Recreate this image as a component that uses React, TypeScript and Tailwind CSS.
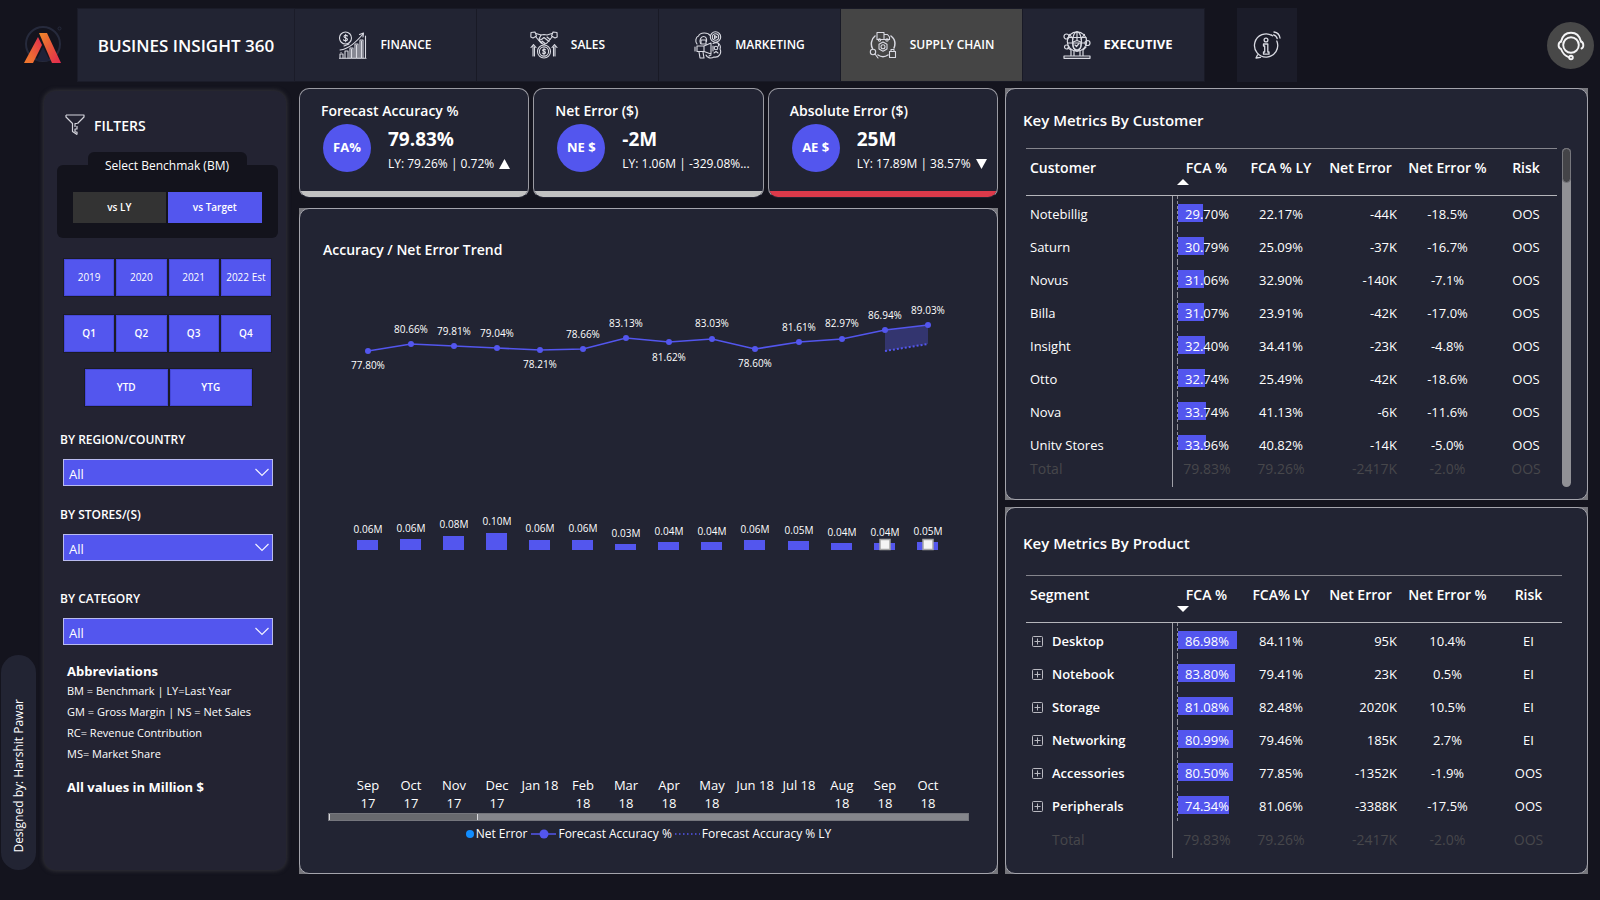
import React from "react";

/* ---------- icons ---------- */

const iconProps = {
  width: 28,
  height: 28,
  viewBox: "0 0 28 28",
  fill: "none",
  stroke: "#d9dae2",
  strokeWidth: 1.1,
  strokeLinecap: "round" as const,
  strokeLinejoin: "round" as const,
  "aria-hidden": true,
};

function Logo() {
  return (
    <svg width="40" height="42" viewBox="0 0 40 42" aria-hidden="true">
      <defs>
        <linearGradient id="legLeft" x1="0" y1="1" x2="1" y2="0">
          <stop offset="0" stopColor="#f07a2c" />
          <stop offset="0.35" stopColor="#ee6a34" />
          <stop offset="1" stopColor="#e2284f" />
        </linearGradient>
        <linearGradient id="legRight" x1="0" y1="0" x2="1" y2="1">
          <stop offset="0" stopColor="#f08a2a" />
          <stop offset="0.5" stopColor="#e8553a" />
          <stop offset="1" stopColor="#e2284f" />
        </linearGradient>
      </defs>
      <circle cx="20" cy="19" r="17" fill="none" stroke="#262a3c" strokeWidth="2" />
      <path d="M20 22 L27 36 H13 Z" fill="#1e2238" />
      <circle cx="36.500" cy="3.500" r="1.500" fill="none" stroke="#262a3c" />
      <path d="M15 12 L19 20 L10 38 H1 Z" fill="url(#legLeft)" />
      <path d="M16 8 H24 L38 38 H29 Z" fill="url(#legRight)" />
    </svg>
  );
}

function FinanceIcon() {
  return (
    <svg {...iconProps}>
      <circle cx="6.500" cy="7" r="6" />
      <path d="M8.500 5 C8 4 5 4 5 5.600 C5 7.500 8.500 6.500 8.500 8.500 C8.500 10 5 10 4.500 8.800 M6.700 3.200 V10.800" />
      <path d="M1 19 C10 18 17 11 24 3 M20.500 3.500 L24.500 2 L24 6" />
      <path d="M1 27 V23 H4 V27 M6 27 V20 H9 V27 M11 27 V17 H14 V27 M16 27 V13 H19 V27 M21 27 V9 H24 V27" />
      <path d="M26.500 5 V27 M0.500 27.300 H27 M12.500 18 V27 M17.500 14 V27 M22.500 10 V27" />
      <path d="M2 21.500 h.1 M5 15 l5 -2" />
    </svg>
  );
}

function SalesIcon() {
  return (
    <svg {...iconProps}>
      <path d="M1 1.500 L5 1 L6.500 5 L3 7 L0.800 6 Z M27 1.500 L23 1 L21.500 5 L25 7 L27.200 6 Z" />
      <path d="M6 2.500 L11 4 L14 3.500 L17 4 L22 2.500 M5.500 5.500 L11 12 L14 13.500 L17 12 L22.500 5.500" />
      <path d="M11 4 L9 8 L11.500 8.500 L14 6.500 L19 10.500 M9 9 L12 12 M17 6 L20 8.500 M12 10 L15 12.500" />
      <circle cx="14" cy="20.500" r="6.500" />
      <circle cx="14" cy="20.500" r="4.600" />
      <path d="M15.500 18.800 C15 18 12.600 18 12.600 19.300 C12.600 20.800 15.500 20 15.500 21.600 C15.500 23 13 23 12.500 22 M14 17.300 V23.800" />
      <path d="M3 25 V14 M1 16.500 L3.500 13.500 L6 16.500 M4.500 25 V16 M25 25 V14 M22 16.500 L24.500 13.500 L27 16.500 M23.500 25 V16" />
    </svg>
  );
}

function MarketingIcon() {
  return (
    <svg {...iconProps}>
      <circle cx="21.500" cy="6" r="5.200" />
      <circle cx="21.500" cy="6" r="3.200" />
      <path d="M20.500 4.500 L23 6 L20.500 7.500 Z" />
      <path d="M16 4.500 C14 1 6 1 4.500 5 C1.500 6 1 11 3 13 M6.500 12.500 C5 9 7 5.500 9.500 5.500 C12 5.500 13 8 12.500 10.500" />
      <path d="M7 9 H12 V13 H7 Z M3 15 H10 L17 12 V23 L10 20.500 H3 Z M1 16 V20 M5 21 L6 27 H10 L9 21 M10 15 V20.500" />
      <path d="M19 12.500 C24 10 27.500 14 26 18 C28 22 25 27 20 26 C17 28 13 27 12 24" />
      <circle cx="22" cy="17" r="1.800" />
      <path d="M19 15 v5 M20 22 l2 -1.500 l2 1.500 M15 25 l2 -1 M24.500 13 v2" />
    </svg>
  );
}

function SupplyIcon() {
  return (
    <svg {...iconProps}>
      <path d="M8 1.500 H15 V8.500 H8 Z M15 3.500 H18.500 L20.500 6 V8.500 H15" />
      <circle cx="10.500" cy="9" r="1.200" />
      <circle cx="18" cy="9" r="1.200" />
      <path d="M6 5 C2 8 1.500 14 3.500 17.500 M22 5 C26 8 26.500 13 25 17 M9 24 C12 26 16 26 19 24" strokeWidth="1.500" />
      <path d="M14 11 L18 13.300 V18 L14 20.300 L10 18 V13.300 Z" />
      <circle cx="14" cy="15.700" r="2" />
      <circle cx="4" cy="21" r="2.700" />
      <path d="M6 23 L9 27 M20.500 20.500 H26.500 V26.500 H20.500 Z M22 20.500 V18.500 H25 V20.500" />
    </svg>
  );
}

function ExecutiveIcon() {
  return (
    <svg {...iconProps} strokeWidth={1.2}>
      <circle cx="14" cy="10.500" r="9.700" />
      <ellipse cx="14" cy="10.500" rx="4.500" ry="9.700" />
      <path d="M14 0.800 V9 M5 6.500 H23 M4.500 12 H23.500 M6.500 3.500 L10 8 M21.500 3.500 L18 8" />
      <circle cx="3.500" cy="5.500" r="2.500" />
      <circle cx="24.500" cy="12" r="2.500" />
      <circle cx="3.500" cy="16" r="2" />
      <path d="M14 9.500 L18 11 V15 C18 17 16 18.500 14 19 C12 18.500 10 17 10 15 V11 Z M12 14 l1.500 1.500 l2.500 -3" />
      <path d="M8 25 V19 L5 17 M20 25 V19 L23 16 M11 25 V20 M17 25 V20 M1 25 H27 V27.300 H1 Z" />
    </svg>
  );
}

function InfoIcon() {
  return (
    <svg {...iconProps} strokeWidth={1.3}>
      <path d="M19.500 4.800 A11.600 11.600 0 1 0 23.800 10 M4.500 24 L3 27 L7.500 26.300" />
      <circle cx="13" cy="9" r="1.900" />
      <path d="M10.500 13 H14.800 V21 H16 V23.200 H10.500 V21 H11.700 V15 H10.500 Z" />
      <path d="M20.500 3.800 C22.500 4.300 23.700 5.500 24.200 7.500 M21 1 C24.500 1.500 26.500 3.500 27 7" />
    </svg>
  );
}

function HeadsetIcon() {
  return (
    <svg width="28" height="30" viewBox="0 0 28 30" fill="none" stroke="#f4f4f6" strokeWidth="1.900" strokeLinecap="round" aria-hidden="true">
      <circle cx="14" cy="14" r="7.800" />
      <path d="M4 10.500 C5.500 4.500 9.500 1.800 14 1.800 C18.500 1.800 22.500 4.500 24 10.500" />
      <path d="M4 10.500 C0.800 11.500 0.800 17 4 18 C5.500 22 8 25 12 26.300" />
      <path d="M24 10.500 C27 11.500 27 16.500 24.500 17.500" />
      <circle cx="14" cy="26.500" r="1.800" />
    </svg>
  );
}

function FunnelIcon() {
  return (
    <svg width="20" height="22" viewBox="0 0 20 22" fill="none" stroke="#d4d4dc" strokeWidth="1.200" strokeLinejoin="round" aria-hidden="true">
      <path d="M1 1 H19 V3 L12.500 9.500 M1 1 V3 L7.500 9.500 V17.500 L12 20.500" />
      <path d="M12.500 9.500 H10 V13 M12 12 V15 H10 V18 H12 V20.500" />
    </svg>
  );
}

/* ---------- header ---------- */

const navItems = [
  { label: "FINANCE", Icon: FinanceIcon },
  { label: "SALES", Icon: SalesIcon },
  { label: "MARKETING", Icon: MarketingIcon },
  { label: "SUPPLY CHAIN", Icon: SupplyIcon, active: true },
  { label: "EXECUTIVE", Icon: ExecutiveIcon, bold: true },
];

function Header() {
  return (
    <header className="flex h-[82px] items-stretch pt-2 pr-[6px]">
      <div className="flex w-[77px] shrink-0 items-center pt-px pl-[23px]">
        <Logo />
      </div>
      <h1 className="flex w-[218px] shrink-0 items-center justify-center border border-[#1b1c29] bg-[#222433] pt-px text-[17px] font-semibold whitespace-nowrap">
        BUSINES INSIGHT 360
      </h1>
      <nav className="flex">
        {navItems.map(({ label, Icon, active, bold }) => (
          <a
            key={label}
            href="#"
            aria-current={active ? "page" : undefined}
            className={
              "flex w-[182px] items-center justify-center gap-[13px] border-y border-r border-[#191a26] whitespace-nowrap " +
              (active ? "bg-[#454545] " : "bg-[#222433] ") +
              (bold ? "pl-2 text-[13px] font-bold" : "text-[12px] font-semibold")
            }
          >
            <Icon />
            {label}
          </a>
        ))}
      </nav>
      <button type="button" aria-label="Information" className="ml-8 flex w-[60px] items-center justify-center bg-[#1b1c29]">
        <InfoIcon />
      </button>
      <button
        type="button"
        aria-label="Support"
        className="mt-[14px] ml-auto flex h-[47px] w-[47px] items-center justify-center rounded-full bg-[#484848]"
      >
        <HeadsetIcon />
      </button>
    </header>
  );
}

/* ---------- filters ---------- */

function ButtonRow({ items, className }: { items: string[]; className: string }) {
  return (
    <div className={"flex gap-[2px] " + className}>
      {items.map((t) => (
        <button
          key={t}
          type="button"
          className="h-[37px] flex-1 border border-[#4548d8] bg-[#5356ee] text-[10px] whitespace-nowrap outline outline-[#1b1b26]"
        >
          {t}
        </button>
      ))}
    </div>
  );
}

function FilterSelect({ id, label, className }: { id: string; label: string; className: string }) {
  return (
    <div className={className}>
      <label htmlFor={id} className="ml-4 block text-[12px] leading-4 font-semibold">
        {label}
      </label>
      <div className="relative mt-[11px] mr-[13px] ml-[19px]">
        <select
          id={id}
          className="block h-[27px] w-full appearance-none rounded-none border border-[#b9bbf0] bg-[#5356ee] pt-[3px] pl-[5px] text-[13px] leading-5 text-white"
        >
          <option>All</option>
        </select>
        <svg
          className="pointer-events-none absolute top-[9px] right-1"
          width="14"
          height="9"
          viewBox="0 0 14 9"
          fill="none"
          stroke="#f2f2ff"
          strokeWidth="1.200"
          aria-hidden="true"
        >
          <path d="M0.500 1 L7 7.500 L13.500 1" />
        </svg>
      </div>
    </div>
  );
}

function Filters() {
  return (
    <aside className="mt-[3px] mb-[4px] w-[242px] shrink-0 rounded-[12px] bg-[#232332] shadow-[0_0_4px_1px_#33333a]">
      <div className="mt-[23px] flex h-[22px] items-center gap-[9px] pl-[21px]">
        <FunnelIcon />
        <h2 className="text-[14px] font-semibold">FILTERS</h2>
      </div>

      <div className="mt-[16px] flex flex-col items-center pl-1">
        <h3 className="h-[13px] w-[159px] rounded-t-[6px] bg-[#13131c] pt-1 text-center text-[12px] leading-5">
          <span className="relative z-10">Select Benchmak (BM)</span>
        </h3>
        <div className="flex h-[73px] w-[221px] gap-[2px] rounded-[6px] bg-[#13131c] px-4 pt-[27px]">
          <button type="button" className="h-[31px] flex-1 bg-[#333333] text-[10px] font-semibold">
            vs LY
          </button>
          <button type="button" aria-pressed="true" className="h-[31px] flex-1 bg-[#5356ee] text-[10px] font-semibold">
            vs Target
          </button>
        </div>
      </div>

      <ButtonRow items={["2019", "2020", "2021", "2022 Est"]} className="mt-[21px] mr-[15px] ml-[20px]" />
      <ButtonRow items={["Q1", "Q2", "Q3", "Q4"]} className="mt-[19px] mr-[15px] ml-[20px] font-semibold" />
      <ButtonRow items={["YTD", "YTG"]} className="mt-[17px] mr-[34px] ml-[41px] font-semibold" />

      <FilterSelect id="region" label="BY REGION/COUNTRY" className="mt-[26px]" />
      <FilterSelect id="stores" label="BY STORES/(S)" className="mt-[21px]" />
      <FilterSelect id="category" label="BY CATEGORY" className="mt-[30px]" />

      <div className="mt-[17px] pb-[56px] pl-[23px] text-[11px] leading-[21px] whitespace-nowrap">
        <h3 className="text-[13px] leading-[18px] font-bold">Abbreviations</h3>
        <p>BM = Benchmark | LY=Last Year</p>
        <p>GM = Gross Margin | NS = Net Sales</p>
        <p>RC= Revenue Contribution</p>
        <p>MS= Market Share</p>
        <p className="mt-[13px] text-[13px] font-bold">All values in Million $</p>
      </div>
    </aside>
  );
}

/* ---------- KPI cards ---------- */

type Kpi = { title: string; badge: string; value: string; detail: string; arrow?: "up" | "down"; alert?: boolean };

const kpis: Kpi[] = [
  { title: "Forecast Accuracy %", badge: "FA%", value: "79.83%", detail: "LY: 79.26% | 0.72%", arrow: "up" },
  { title: "Net Error ($)", badge: "NE $", value: "-2M", detail: "LY: 1.06M | -329.08%..." },
  { title: "Absolute Error ($)", badge: "AE $", value: "25M", detail: "LY: 17.89M | 38.57%", arrow: "down", alert: true },
];

function Triangle({ dir }: { dir: "up" | "down" }) {
  return (
    <svg width="11" height="10" viewBox="0 0 11 10" fill="#fff" aria-hidden="true">
      <path d={dir === "up" ? "M5.500 0 L11 10 H0 Z" : "M5.500 10 L11 0 H0 Z"} />
    </svg>
  );
}

function KpiCard({ title, badge, value, detail, arrow, alert }: Kpi) {
  return (
    <section className="flex h-[110px] min-w-0 flex-1 flex-col overflow-hidden rounded-[10px] border border-[#9a9aa2] border-b-transparent bg-[#222433]">
      <h2 className="mt-3 ml-[21px] text-[14px] leading-5 font-semibold">{title}</h2>
      <div className="ml-[23px] flex flex-1 gap-[17px] pt-[3px]">
        <div className="flex h-12 w-12 shrink-0 items-center justify-center rounded-full bg-[#5356ee] text-[13px] font-bold whitespace-nowrap">
          {badge}
        </div>
        <div className="whitespace-nowrap">
          <p className="pt-px text-[19px] leading-7 font-bold">{value}</p>
          <p className="flex items-center gap-[5px] text-[12px] leading-[22px]">
            {detail}
            {arrow && <Triangle dir={arrow} />}
          </p>
        </div>
      </div>
      <div className={"-mb-px h-[7px] " + (alert ? "bg-[#dc3a4a]" : "bg-[#c2c2c2]")} />
    </section>
  );
}

/* ---------- trend chart ---------- */

type Point = { month: string; year?: string; acc: string; y: number; ly: number; err: string; top: number; ey: number };

const points: Point[] = [
  { month: "Sep", year: "17", acc: "77.80%", y: 81, ly: 95, err: "0.06M", top: 270, ey: 259 },
  { month: "Oct", year: "17", acc: "80.66%", y: 74, ly: 59, err: "0.06M", top: 269, ey: 258 },
  { month: "Nov", year: "17", acc: "79.81%", y: 76, ly: 61, err: "0.08M", top: 266, ey: 254 },
  { month: "Dec", year: "17", acc: "79.04%", y: 78, ly: 63, err: "0.10M", top: 263, ey: 251 },
  { month: "Jan 18", acc: "78.21%", y: 80, ly: 94, err: "0.06M", top: 270, ey: 258 },
  { month: "Feb", year: "18", acc: "78.66%", y: 79, ly: 64, err: "0.06M", top: 270, ey: 258 },
  { month: "Mar", year: "18", acc: "83.13%", y: 68, ly: 53, err: "0.03M", top: 274, ey: 263 },
  { month: "Apr", year: "18", acc: "81.62%", y: 72, ly: 87, err: "0.04M", top: 272, ey: 261 },
  { month: "May", year: "18", acc: "83.03%", y: 69, ly: 53, err: "0.04M", top: 272, ey: 261 },
  { month: "Jun 18", acc: "78.60%", y: 79, ly: 93, err: "0.06M", top: 270, ey: 259 },
  { month: "Jul 18", acc: "81.61%", y: 72, ly: 57, err: "0.05M", top: 271, ey: 260 },
  { month: "Aug", year: "18", acc: "82.97%", y: 69, ly: 53, err: "0.04M", top: 273, ey: 262 },
  { month: "Sep", year: "18", acc: "86.94%", y: 60, ly: 45, err: "0.04M", top: 273, ey: 262 },
  { month: "Oct", year: "18", acc: "89.03%", y: 55, ly: 40, err: "0.05M", top: 272, ey: 261 },
];

const px = (i: number) => Math.round(68 + i * 43.05);
const BASE = 280;

function TrendPlot() {
  const a = px(12);
  const b = px(13);
  return (
    <svg viewBox="0 0 697 542" className="mt-[9px] block w-full" role="img" aria-label="Accuracy and net error by month">
      <path d={`M${a} 60 L${b} 55 V74 L${a} 81 Z`} fill="#33356f" />
      <path d={`M${a} 81 L${b} 74`} stroke="#5356ee" strokeWidth="2" strokeDasharray="2 2" />
      <polyline points={points.map((p, i) => `${px(i)},${p.y}`).join(" ")} fill="none" stroke="#5356ee" strokeWidth="1.600" />
      {points.map((p, i) => (
        <g key={i} textAnchor="middle" fill="#fff">
          <circle cx={px(i)} cy={p.y} r="3" fill="#5356ee" />
          <text x={px(i)} y={p.ly + 4} fontSize="10">{p.acc}</text>
          <rect x={px(i) - 11} y={p.top} width="21" height={BASE - p.top} fill="#5356ee" />
          <text x={px(i)} y={p.ey + 4} fontSize="10">{p.err}</text>
          {i > 11 && <rect x={px(i) - 5} y="269.500" width="10" height="10" fill="#f4f4f4" stroke="#a5a5a5" strokeWidth="1.500" />}
          <text x={px(i)} y="520" fontSize="13">{p.month}</text>
          {p.year && <text x={px(i)} y="538" fontSize="13">{p.year}</text>}
        </g>
      ))}
    </svg>
  );
}

function TrendCard() {
  return (
    <section className="flex-1 bg-[#77777d]">
      <div className="h-full rounded-[10px] border border-[#a4a4ac] bg-[#222433] pb-[28px]">
        <h2 className="pt-[30px] pl-[23px] text-[14px] leading-[22px] font-semibold">Accuracy / Net Error Trend</h2>
        <TrendPlot />
        <div className="mx-[28px] mt-px h-2 border border-[#75767d] bg-[#85868c]">
          <div className="h-full w-[149px] border-x border-[#d8d8dc] bg-[#68696e]" />
        </div>
        <ul className="mt-[3px] flex h-5 items-center justify-center text-[12px] whitespace-nowrap">
          <li className="flex items-center gap-[2px]">
            <span className="h-2 w-2 rounded-full bg-[#118dff]" />
            Net Error
          </li>
          <li className="ml-1 flex items-center gap-[2px]">
            <svg width="25" height="10" viewBox="0 0 25 10" aria-hidden="true">
              <path d="M0 5 H25" stroke="#5356ee" strokeWidth="1.500" />
              <circle cx="13" cy="5" r="4.500" fill="#5356ee" />
            </svg>
            Forecast Accuracy %
          </li>
          <li className="ml-[3px] flex items-center gap-[2px]">
            <svg width="25" height="10" viewBox="0 0 25 10" aria-hidden="true">
              <path d="M0 5 H25" stroke="#5356ee" strokeWidth="1.500" strokeDasharray="1.500 2.500" />
            </svg>
            Forecast Accuracy % LY
          </li>
        </ul>
      </div>
    </section>
  );
}

/* ---------- tables ---------- */

type Row = [string, string, string, string, string, string];

const customers: Row[] = [
  ["Notebillig", "29.70%", "22.17%", "-44K", "-18.5%", "OOS"],
  ["Saturn", "30.79%", "25.09%", "-37K", "-16.7%", "OOS"],
  ["Novus", "31.06%", "32.90%", "-140K", "-7.1%", "OOS"],
  ["Billa", "31.07%", "23.91%", "-42K", "-17.0%", "OOS"],
  ["Insight", "32.40%", "34.41%", "-23K", "-4.8%", "OOS"],
  ["Otto", "32.74%", "25.49%", "-42K", "-18.6%", "OOS"],
  ["Nova", "33.74%", "41.13%", "-6K", "-11.6%", "OOS"],
  ["Unity Stores", "33.96%", "40.82%", "-14K", "-5.0%", "OOS"],
];

const segments: Row[] = [
  ["Desktop", "86.98%", "84.11%", "95K", "10.4%", "EI"],
  ["Notebook", "83.80%", "79.41%", "23K", "0.5%", "EI"],
  ["Storage", "81.08%", "82.48%", "2020K", "10.5%", "EI"],
  ["Networking", "80.99%", "79.46%", "185K", "2.7%", "EI"],
  ["Accessories", "80.50%", "77.85%", "-1352K", "-1.9%", "OOS"],
  ["Peripherals", "74.34%", "81.06%", "-3388K", "-17.5%", "OOS"],
];

const total: Row = ["Total", "79.83%", "79.26%", "-2417K", "-2.0%", "OOS"];

function Columns({ wide }: { wide?: boolean }) {
  return (
    <colgroup>
      <col />
      <col className="w-[69px]" />
      <col className="w-[80px]" />
      <col className="w-[79px]" />
      <col className="w-[95px]" />
      <col className={wide ? "w-[67px]" : "w-[62px]"} />
    </colgroup>
  );
}

type MetricTableProps = { heads: string[]; rows: Row[]; sort: "up" | "down"; scale: number; expandable?: boolean };

function MetricTable({ heads, rows, sort, scale, expandable }: MetricTableProps) {
  return (
    <table className="w-full table-fixed border-separate border-spacing-0 text-[13px] whitespace-nowrap">
      <Columns wide={expandable} />
      <thead>
        <tr>
          {heads.map((h, i) => (
            <th
              key={h}
              scope="col"
              className={
                "relative h-[48px] border-y border-t-[#85858d] border-b-[#b5b5bb] p-0 pt-[9px] align-top text-[14px] leading-5 font-semibold " +
                (i === 0 ? "pl-1 text-left" : "text-center")
              }
            >
              {h}
              {i === 1 && (
                <svg className="absolute bottom-[10px] left-[5px]" width="12" height="6" viewBox="0 0 12 6" fill="#fff" aria-hidden="true">
                  <path d={sort === "up" ? "M6 0 L12 6 H0 Z" : "M6 6 L12 0 H0 Z"} />
                </svg>
              )}
            </th>
          ))}
        </tr>
      </thead>
      <tbody>
        {rows.map((r) => (
          <tr key={r[0]}>
            <td className="h-[33px] p-0 pt-1 pl-1">
              {expandable ? (
                <span className="flex items-center gap-[9px] pl-[2px] font-semibold">
                  <button type="button" aria-label={"Expand " + r[0]} className="flex">
                    <svg width="11" height="11" viewBox="0 0 11 11" fill="none" stroke="#b9b9c0" aria-hidden="true">
                      <rect x="0.500" y="0.500" width="10" height="10" rx="1" />
                      <path d="M2.500 5.500 H8.500 M5.500 2.500 V8.500" />
                    </svg>
                  </button>
                  {r[0]}
                </span>
              ) : (
                r[0]
              )}
            </td>
            <td className="relative border-l border-[#a0a0a8] p-0 pt-1 text-center">
              <span className="absolute inset-y-0 left-[4px] border-l border-dashed border-[#8f8f98]" />
              <span className="absolute top-2 left-[5px] h-[18px] bg-[#5356ee]" style={{ width: Math.round(parseFloat(r[1]) * scale) }} />
              <span className="relative">{r[1]}</span>
            </td>
            <td className="p-0 pt-1 text-center">{r[2]}</td>
            <td className="p-0 pt-1 pr-[3px] text-right">{r[3]}</td>
            <td className="p-0 pt-1 text-center">{r[4]}</td>
            <td className="p-0 pt-1 text-center">{r[5]}</td>
          </tr>
        ))}
      </tbody>
    </table>
  );
}

function TotalTable({ indent }: { indent?: boolean }) {
  return (
    <table className="w-full table-fixed border-separate border-spacing-0 text-[14px] whitespace-nowrap text-[#47474b]">
      <Columns wide={indent} />
      <tbody>
        <tr>
          <th scope="row" className={"h-[37px] p-0 text-left font-normal " + (indent ? "pl-[26px]" : "pl-1")}>
            {total[0]}
          </th>
          <td className="border-l border-[#a0a0a8] p-0 text-center">{total[1]}</td>
          <td className="p-0 text-center">{total[2]}</td>
          <td className="p-0 pr-[3px] text-right">{total[3]}</td>
          <td className="p-0 text-center">{total[4]}</td>
          <td className="p-0 text-center">{total[5]}</td>
        </tr>
      </tbody>
    </table>
  );
}

function CustomerCard() {
  return (
    <section className="bg-[#77777d]">
      <div className="rounded-[10px] border border-[#a4a4ac] bg-[#222433] pr-4 pb-3 pl-5">
        <h2 className="-ml-[3px] pt-5 text-[15px] leading-[22px] font-semibold">Key Metrics By Customer</h2>
        <div className="mt-[17px] flex gap-[5px]">
          <div className="min-w-0 flex-1">
            <div className="h-[302px] overflow-hidden">
              <MetricTable
                heads={["Customer", "FCA %", "FCA % LY", "Net Error", "Net Error %", "Risk"]}
                rows={customers}
                sort="up"
                scale={0.835}
              />
            </div>
            <TotalTable />
          </div>
          <div className="w-[9px] rounded-full bg-[#909095]">
            <div className="h-[35px] rounded-full border border-[#77777d] bg-[#444448]" />
          </div>
        </div>
      </div>
    </section>
  );
}

function ProductCard() {
  return (
    <section className="bg-[#77777d]">
      <div className="rounded-[10px] border border-[#a4a4ac] bg-[#222433] pr-[25px] pb-[15px] pl-5">
        <h2 className="-ml-[3px] pt-6 text-[15px] leading-[22px] font-semibold">Key Metrics By Product</h2>
        <div className="mt-[21px]">
          <MetricTable
            heads={["Segment", "FCA %", "FCA% LY", "Net Error", "Net Error %", "Risk"]}
            rows={segments}
            sort="down"
            scale={0.682}
            expandable
          />
          <TotalTable indent />
        </div>
      </div>
    </section>
  );
}

/* ---------- page ---------- */

export default function App() {
  return (
    <div className="min-h-screen bg-[#14141e] font-['Open_Sans','Noto_Sans',sans-serif] text-white">
      <Header />
      <main className="flex pt-[6px] pr-3">
        <div className="flex w-[44px] shrink-0 items-end pb-[4px] pl-px">
          <div className="flex h-[215px] w-[35px] items-end justify-center rounded-full bg-[#222433] pb-[17px]">
            <span className="rotate-180 text-[12px] leading-5 whitespace-nowrap [writing-mode:vertical-rl]">Designed by: Harshit Pawar</span>
          </div>
        </div>
        <Filters />
        <div className="ml-[13px] flex min-w-0 flex-[699] flex-col gap-[10px]">
          <div className="flex gap-[4px]">
            {kpis.map((k) => (
              <KpiCard key={k.title} {...k} />
            ))}
          </div>
          <TrendCard />
        </div>
        <div className="ml-[7px] flex min-w-0 flex-[583] flex-col gap-[7px]">
          <CustomerCard />
          <ProductCard />
        </div>
      </main>
    </div>
  );
}
